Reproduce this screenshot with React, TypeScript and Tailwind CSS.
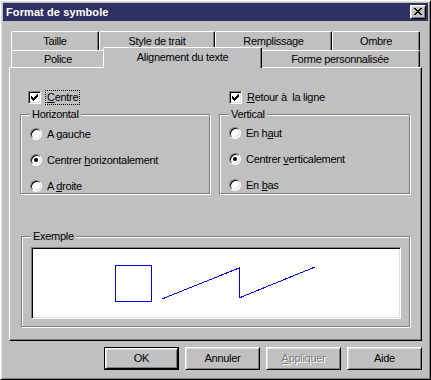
const raised =
  'border border-t-white border-l-white border-r-black border-b-black shadow-[inset_1px_1px_0_#dfdfdf,inset_-1px_-1px_0_#808080]';
const sunken =
  'border border-t-[#808080] border-l-[#808080] border-r-white border-b-white shadow-[inset_1px_1px_0_#000,inset_-1px_-1px_0_#dfdfdf]';

const checkRows = ['......#', '.....##', '#...###', '##.###.', '#####..', '.###...', '..#....'];
const closeRows = ['##....##', '.##..##.', '..####..', '...##...', '..####..', '.##..##.', '##....##'];

function Pixels({ rows, color = '#000' }: { rows: string[]; color?: string }) {
  return (
    <svg width={rows[0].length} height={rows.length} shapeRendering="crispEdges">
      {rows.map((r, y) =>
        r.split('').map((c, x) => (c === '#' ? <rect key={`${x}-${y}`} x={x} y={y} width="1" height="1" fill={color} /> : null))
      )}
    </svg>
  );
}

function CheckBox() {
  return (
    <span className={`flex h-[13px] w-[13px] shrink-0 items-center justify-center bg-white ${sunken}`}>
      <Pixels rows={checkRows} />
    </span>
  );
}

function Radio({ checked, label }: { checked?: boolean; label: React.ReactNode }) {
  return (
    <div className="flex h-[16px] items-center gap-[5px]">
      <span className={`flex h-[12px] w-[12px] shrink-0 items-center justify-center rounded-full bg-white ${sunken}`}>
        {checked && <span className="h-[4px] w-[4px] rounded-full bg-black" />}
      </span>
      <span>{label}</span>
    </div>
  );
}

function Group({ label, className, children }: { label: string; className: string; children: React.ReactNode }) {
  return (
    <div className={`relative border border-[#808080] shadow-[1px_1px_0_#fff,inset_1px_1px_0_#fff] ${className}`}>
      <span className="absolute -top-[8px] left-[9px] bg-[#c0c0c0] px-[2px] leading-[14px]">{label}</span>
      {children}
    </div>
  );
}

function Tab({ label, w, selected }: { label: string; w: string; selected?: boolean }) {
  return (
    <div
      className={`flex items-center justify-center rounded-t-[2px] border-t border-l border-r border-t-white border-l-white border-r-black bg-[#c0c0c0] shadow-[inset_-1px_0_0_#808080] ${w} ${
        selected ? 'relative z-10 -mx-[2px] -mb-[1px] h-[21px] pb-[1px]' : 'h-full'
      }`}
    >
      {label}
    </div>
  );
}

function Button({ children, isDefault }: { children: React.ReactNode; isDefault?: boolean }) {
  if (isDefault) {
    return (
      <div className="h-[23px] w-[75px] border border-black">
        <div className={`flex h-full w-full items-center justify-center ${raised}`}>{children}</div>
      </div>
    );
  }
  return <div className={`flex h-[23px] w-[75px] items-center justify-center ${raised}`}>{children}</div>;
}

export default function App() {
  return (
    <div
      className={`h-[380px] w-[431px] bg-[#c0c0c0] p-[2px] font-['Liberation_Sans',Arial,sans-serif] text-[11px] tracking-[-0.3px] text-black ${raised}`}
    >
      {/* title bar */}
      <div className="flex h-[18px] items-center justify-between bg-[#303062] pl-[3px] pr-[2px]">
        <span className="text-[11px] font-bold tracking-[0.1px] text-white">Format de symbole</span>
        <div className={`flex h-[14px] w-[16px] items-center justify-center bg-[#c0c0c0] pb-[1px] ${raised}`}>
          <Pixels rows={closeRows} />
        </div>
      </div>

      <div className="mx-[6px] mt-[10px]">
        {/* tabs */}
        <div className="pl-[2px]">
          <div className="flex h-[19px]">
            <Tab label="Taille" w="w-[88px]" />
            <Tab label="Style de trait" w="w-[116px]" />
            <Tab label="Remplissage" w="w-[117px]" />
            <Tab label="Ombre" w="w-[88px]" />
          </div>
          <div className="flex h-[17px] items-end">
            <Tab label="Police" w="w-[94px]" />
            <Tab label="Alignement du texte" w="w-[159px]" selected />
            <Tab label="Forme personnalisée" w="w-[160px]" />
          </div>
        </div>

        {/* panel */}
        <div className="h-[274px] border border-t-white border-l-white border-r-black border-b-black px-[10px] pt-[22px] shadow-[inset_-1px_-1px_0_#808080]">
          <div className="grid grid-cols-[190px_191px] gap-x-[9px]">
            <div className="flex h-[15px] items-center pl-[8px]">
              <CheckBox />
              <span className="ml-[4px] border border-dotted border-black px-[1px] leading-[13px]">
                <u>C</u>entre
              </span>
            </div>
            <div className="flex h-[15px] items-center pl-[10px]">
              <CheckBox />
              <span className="ml-[5px]">
                <u>R</u>etour à&nbsp; la ligne
              </span>
            </div>

            <Group label="Horizontal" className="mt-[9px] h-[80px]">
              <div className="flex flex-col gap-[10px] pl-[9px] pt-[11px]">
                <Radio label={<>A <u>g</u>auche</>} />
                <Radio checked label={<>Centrer <u>h</u>orizontalement</>} />
                <Radio label={<>A <u>d</u>roite</>} />
              </div>
            </Group>
            <Group label="Vertical" className="mt-[9px] h-[80px]">
              <div className="flex flex-col gap-[10px] pl-[9px] pt-[10px]">
                <Radio label={<>En h<u>a</u>ut</>} />
                <Radio checked label={<>Centrer <u>v</u>erticalement</>} />
                <Radio label={<>En <u>b</u>as</>} />
              </div>
            </Group>
          </div>

          <Group label="Exemple" className="ml-[1px] mt-[42px] h-[91px] w-[389px] pl-[9px] pt-[10px]">
            <div className={`h-[72px] w-[370px] bg-white ${sunken}`}>
              <svg width="368" height="70" shapeRendering="crispEdges" className="block">
                <rect x="83.5" y="17.5" width="36" height="36" fill="none" stroke="#0000ff" strokeWidth="1" />
                <polyline points="130,51 207,20 207,50 283,19" fill="none" stroke="#0000ff" strokeWidth="1" />
              </svg>
            </div>
          </Group>
        </div>

        {/* buttons */}
        <div className="mt-[6px] flex justify-end gap-[6px]">
          <Button isDefault>OK</Button>
          <Button>Annuler</Button>
          <Button>
            <span className="text-[#808080] [text-shadow:1px_1px_0_#fff]">
              <u>A</u>ppliquer
            </span>
          </Button>
          <Button>Aide</Button>
        </div>
      </div>
    </div>
  );
}
